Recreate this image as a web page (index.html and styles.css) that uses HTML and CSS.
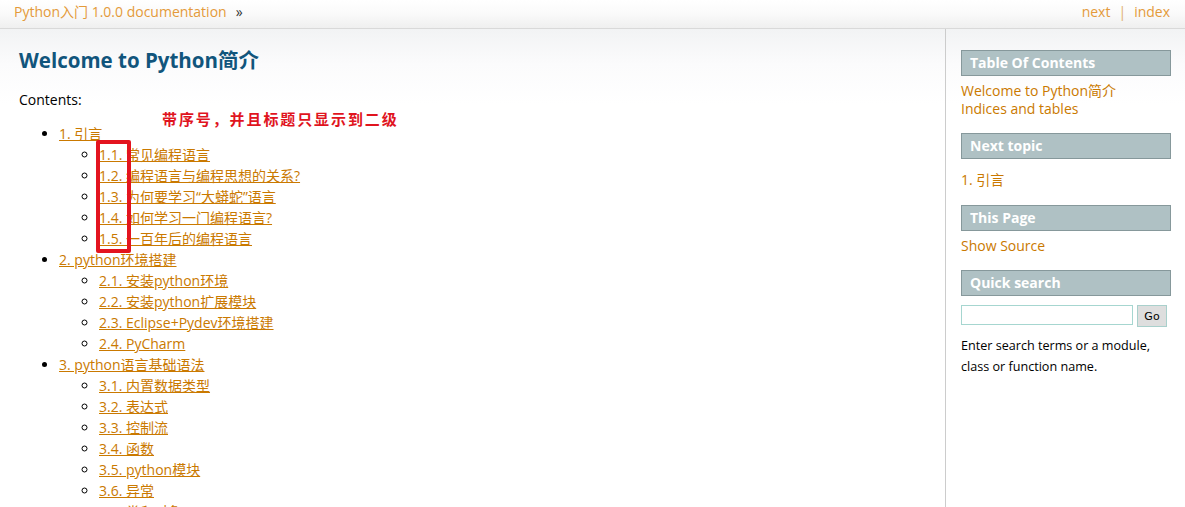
FILE: index.html
```
<!DOCTYPE html>
<html lang="zh-CN">
<head>
<meta charset="utf-8">
<title>Welcome to Python简介 — Python入门 1.0.0 documentation</title>
<link rel="stylesheet" href="styles.css">
</head>
<body>
<div class="related">
  <div class="crumbs"><a href="#">Python入门 1.0.0 documentation</a><span class="raquo">»</span></div>
  <div class="navlinks"><a href="#">next</a><span class="sep">|</span><a href="#">index</a></div>
</div>
<div class="page">
  <div class="document">
    <h1>Welcome to Python简介</h1>
    <p class="label">Contents:</p>
    <ul class="toc">
      <li><a href="#">1. 引言</a>
        <ul>
          <li><a href="#">1.1. 常见编程语言</a></li>
          <li><a href="#">1.2. 编程语言与编程思想的关系?</a></li>
          <li><a href="#">1.3. 为何要学习“大蟒蛇”语言</a></li>
          <li><a href="#">1.4. 如何学习一门编程语言?</a></li>
          <li><a href="#">1.5. 一百年后的编程语言</a></li>
        </ul>
      </li>
      <li><a href="#">2. python环境搭建</a>
        <ul>
          <li><a href="#">2.1. 安装python环境</a></li>
          <li><a href="#">2.2. 安装python扩展模块</a></li>
          <li><a href="#">2.3. Eclipse+Pydev环境搭建</a></li>
          <li><a href="#">2.4. PyCharm</a></li>
        </ul>
      </li>
      <li><a href="#">3. python语言基础语法</a>
        <ul>
          <li><a href="#">3.1. 内置数据类型</a></li>
          <li><a href="#">3.2. 表达式</a></li>
          <li><a href="#">3.3. 控制流</a></li>
          <li><a href="#">3.4. 函数</a></li>
          <li><a href="#">3.5. python模块</a></li>
          <li><a href="#">3.6. 异常</a></li>
          <li><a href="#">3.7. 类和对象</a></li>
        </ul>
      </li>
    </ul>
    <div class="note">带序号，并且标题只显示到二级</div>
    <div class="markbox"></div>
  </div>
  <div class="sidebar">
    <h3>Table Of Contents</h3>
    <ul class="side-list">
      <li><a href="#">Welcome to Python简介</a></li>
      <li><a href="#">Indices and tables</a></li>
    </ul>
    <h3>Next topic</h3>
    <p class="topless"><a href="#">1. 引言</a></p>
    <h3>This Page</h3>
    <ul class="side-list">
      <li><a href="#">Show Source</a></li>
    </ul>
    <h3>Quick search</h3>
    <form class="search">
      <input type="text" class="q">
      <button type="button" class="go">Go</button>
    </form>
    <p class="searchtip">Enter search terms or a module, class or function name.</p>
  </div>
</div>
</body>
</html>
```
FILE: styles.css
```
html, body {
  margin: 0;
  padding: 0;
}
body {
  font-family: "Open Sans", "Noto Sans CJK SC", sans-serif;
  font-size: 14px;
  line-height: 21px;
  color: #000;
  background: #fff;
}
a {
  color: #ca7900;
}
.related {
  height: 28px;
  border-bottom: 1px solid #d9d9d9;
  background: linear-gradient(to bottom, #ffffff 0%, #fafafa 50%, #efefef 100%);
  display: flex;
  justify-content: space-between;
  align-items: flex-start;
  padding: 0 15px 0 14px;
  line-height: 23px;
}
.related a {
  color: #e49a3a;
  text-decoration: none;
}
.raquo {
  margin-left: 9px;
  color: #333;
}
.sep {
  margin: 0 8px;
  color: #e0b070;
}
.page {
  display: flex;
  min-height: calc(100vh - 29px);
  background: linear-gradient(to bottom, #f2f3f4 0px, #fbfbfc 35px, #ffffff 75px);
}
.document {
  flex: 1;
  position: relative;
  padding: 21px 0 0 19px;
}
h1 {
  margin: 0;
  font-size: 20.5px;
  line-height: 21px;
  font-weight: bold;
  color: #11557c;
}
.label {
  margin: 18px 0 0 0;
}
.toc {
  margin: 13px 0 0 0;
  padding-left: 40px;
}
.toc ul {
  margin: 0;
  padding-left: 40px;
  list-style-type: circle;
}
.toc li {
  line-height: 21px;
}
.note {
  position: absolute;
  left: 162px;
  top: 81px;
  font-size: 15px;
  line-height: 17px;
  font-weight: bold;
  letter-spacing: 1.9px;
  color: #e0141e;
  font-family: "Noto Sans CJK SC", sans-serif;
}
.markbox {
  position: absolute;
  left: 96px;
  top: 111px;
  width: 27px;
  height: 105px;
  border: 4px solid #e3141f;
  border-radius: 2px;
}
.sidebar {
  width: 210px;
  flex: none;
  border-left: 1px solid #cccccc;
  padding: 21px 14px 15px 15px;
}
.sidebar a {
  text-decoration: none;
}
.sidebar h3 {
  margin: 15px 0 0 0;
  height: 24px;
  padding: 0 0 0 8px;
  border: 1px solid #86989b;
  background: #afc1c4;
  color: #fff;
  font-size: 14px;
  line-height: 24px;
  font-weight: bold;
}
.sidebar h3:first-child {
  margin-top: 0;
}
.side-list {
  list-style: none;
  margin: 6px 0 0 0;
  padding: 0;
  line-height: 18px;
}
.topless {
  margin: 10px 0 0 0;
}
.search {
  margin: 9px 0 0 0;
  display: flex;
  align-items: flex-start;
  gap: 4px;
}
.q {
  box-sizing: border-box;
  width: 172px;
  height: 20px;
  margin: 0;
  border: 1px solid #a6d6d0;
  background: #fff;
  padding: 0 2px;
}
.go {
  box-sizing: border-box;
  width: 30px;
  height: 22px;
  margin: 0;
  padding: 0;
  border: 1px solid #a9d0cc;
  background: #dedede;
  font-family: "DejaVu Sans", sans-serif;
  font-size: 11px;
  color: #000;
}
.searchtip {
  margin: 8px 0 0 0;
  font-size: 12.6px;
}
```
